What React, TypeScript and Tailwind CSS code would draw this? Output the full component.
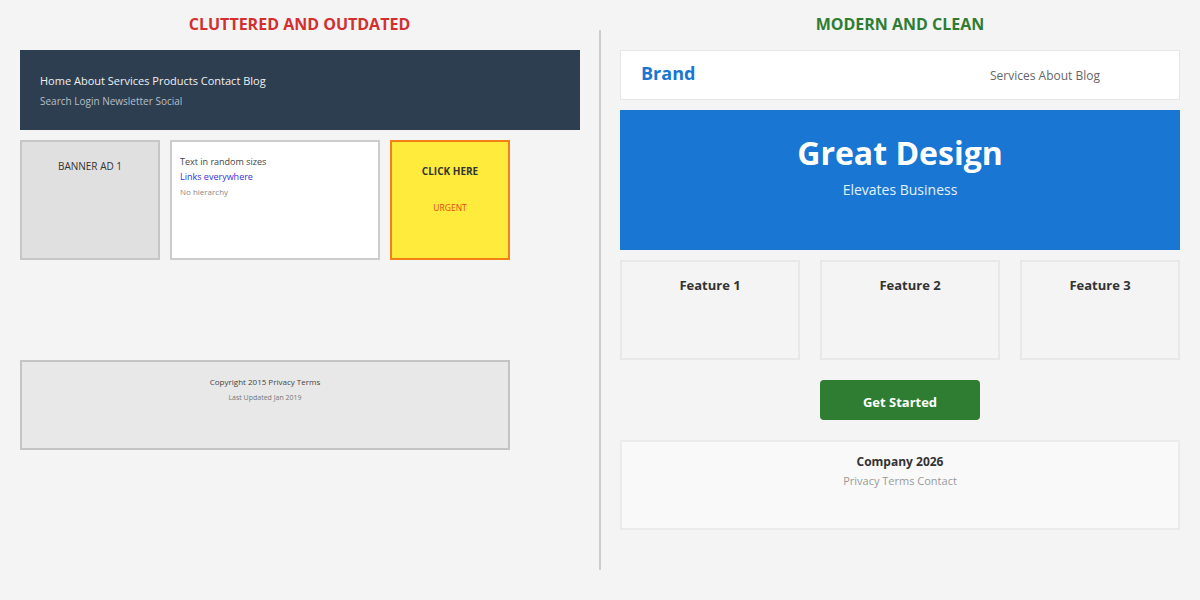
import React from "react";

const features = [
  { name: "Feature 1", width: "w-[180px]" },
  { name: "Feature 2", width: "w-[180px]" },
  { name: "Feature 3", width: "w-[160px]" },
];

const ClutteredSide: React.FC = () => (
  <div className="w-[599px]">
    {/* Heading */}
    <div className="h-[48px] flex items-center justify-center">
      <h2 className="text-[16px] font-bold text-[#d32f2f]">CLUTTERED AND OUTDATED</h2>
    </div>

    <div className="pl-5">
      {/* Crowded nav bar */}
      <div className="mt-[2px] w-[560px] h-[80px] bg-[#2d3e50] pl-5 pt-[23px]">
        <div className="text-[11px] leading-[16px] text-[#f0f0f0]">
          Home About Services Products Contact Blog
        </div>
        <div className="mt-[4px] text-[10px] leading-[16px] text-[#b8bec6]">
          Search Login Newsletter Social
        </div>
      </div>

      {/* Random boxes */}
      <div className="mt-[10px] flex gap-[10px] h-[120px]">
        <div className="w-[140px] border-2 border-[#c6c6c6] bg-[#e0e0e0] pt-[10px] text-center">
          <span className="text-[10px] leading-[16px] text-[#333]">BANNER AD 1</span>
        </div>
        <div className="w-[210px] border-2 border-[#cccccc] bg-white pl-2 pt-[13px]">
          <div className="text-[9px] leading-[14px] text-[#444]">Text in random sizes</div>
          <div className="mt-[1px] text-[9px] leading-[14px] text-[#3333dd]">Links everywhere</div>
          <div className="mt-[2px] text-[8px] leading-[12px] text-[#888]">No hierarchy</div>
        </div>
        <div className="w-[120px] border-2 border-[#f57f17] bg-[#ffeb3b] pt-[21px] text-center">
          <div className="text-[10px] leading-[16px] font-bold text-[#333]">CLICK HERE</div>
          <div className="mt-[23px] text-[8.5px] leading-[12px] text-[#e64a19]">URGENT</div>
        </div>
      </div>

      {/* Old footer */}
      <div className="mt-[100px] w-[490px] h-[90px] border-2 border-[#c4c4c4] bg-[#e8e8e8] pt-[14px] text-center">
        <div className="text-[8px] leading-[12px] text-[#444]">Copyright 2015 Privacy Terms</div>
        <div className="mt-[5px] text-[7px] leading-[10px] text-[#777]">Last Updated Jan 2019</div>
      </div>
    </div>
  </div>
);

const CleanSide: React.FC = () => (
  <div className="flex-1 pl-[19px] pr-5">
    {/* Heading */}
    <div className="h-[48px] flex items-center justify-center">
      <h2 className="text-[16px] font-bold text-[#2e7d32]">MODERN AND CLEAN</h2>
    </div>

    {/* Nav */}
    <div className="mt-[2px] h-[50px] bg-white border border-[#e6e6e6] flex items-center pl-5">
      <span className="text-[18px] font-bold text-[#1976d2] -mt-[4px]">Brand</span>
      <span className="ml-auto mr-[79px] mt-[2px] text-[12px] text-[#666]">Services About Blog</span>
    </div>

    {/* Hero */}
    <div className="mt-[10px] h-[140px] bg-[#1976d2] flex flex-col items-center pt-[21px]">
      <div className="text-[32px] leading-[44px] font-bold text-white">Great Design</div>
      <div className="mt-[5px] text-[14px] leading-[20px] text-[#e3f2fd]">Elevates Business</div>
    </div>

    {/* Feature cards */}
    <div className="mt-[10px] flex gap-5">
      {features.map((f) => (
        <div
          key={f.name}
          className={`${f.width} h-[100px] border-2 border-[#e8e8e8] bg-[#f4f4f4] pt-[10px] text-center`}
        >
          <span className="text-[13px] leading-[18px] font-bold text-[#333]">{f.name}</span>
        </div>
      ))}
    </div>

    {/* CTA */}
    <div className="mt-5 flex justify-center">
      <button className="w-[160px] h-[40px] rounded-[4px] bg-[#2e7d32] pt-[5px] text-[13px] font-bold text-white">
        Get Started
      </button>
    </div>

    {/* Footer */}
    <div className="mt-5 h-[90px] border-2 border-[#ebebeb] bg-[#f9f9f9] pt-[11px] text-center">
      <div className="text-[12px] leading-[18px] font-bold text-[#333]">Company 2026</div>
      <div className="mt-[2px] text-[11px] leading-[16px] text-[#999]">Privacy Terms Contact</div>
    </div>
  </div>
);

const App: React.FC = () => {
  return (
    <div
      className="w-[1200px] h-[600px] bg-[#f4f4f4] flex overflow-hidden"
      style={{ fontFamily: '"Open Sans", "Noto Sans", sans-serif' }}
    >
      <ClutteredSide />
      {/* Divider */}
      <div className="w-[2px] my-[30px] bg-[#cccccc]" />
      <CleanSide />
    </div>
  );
};

export default App;
